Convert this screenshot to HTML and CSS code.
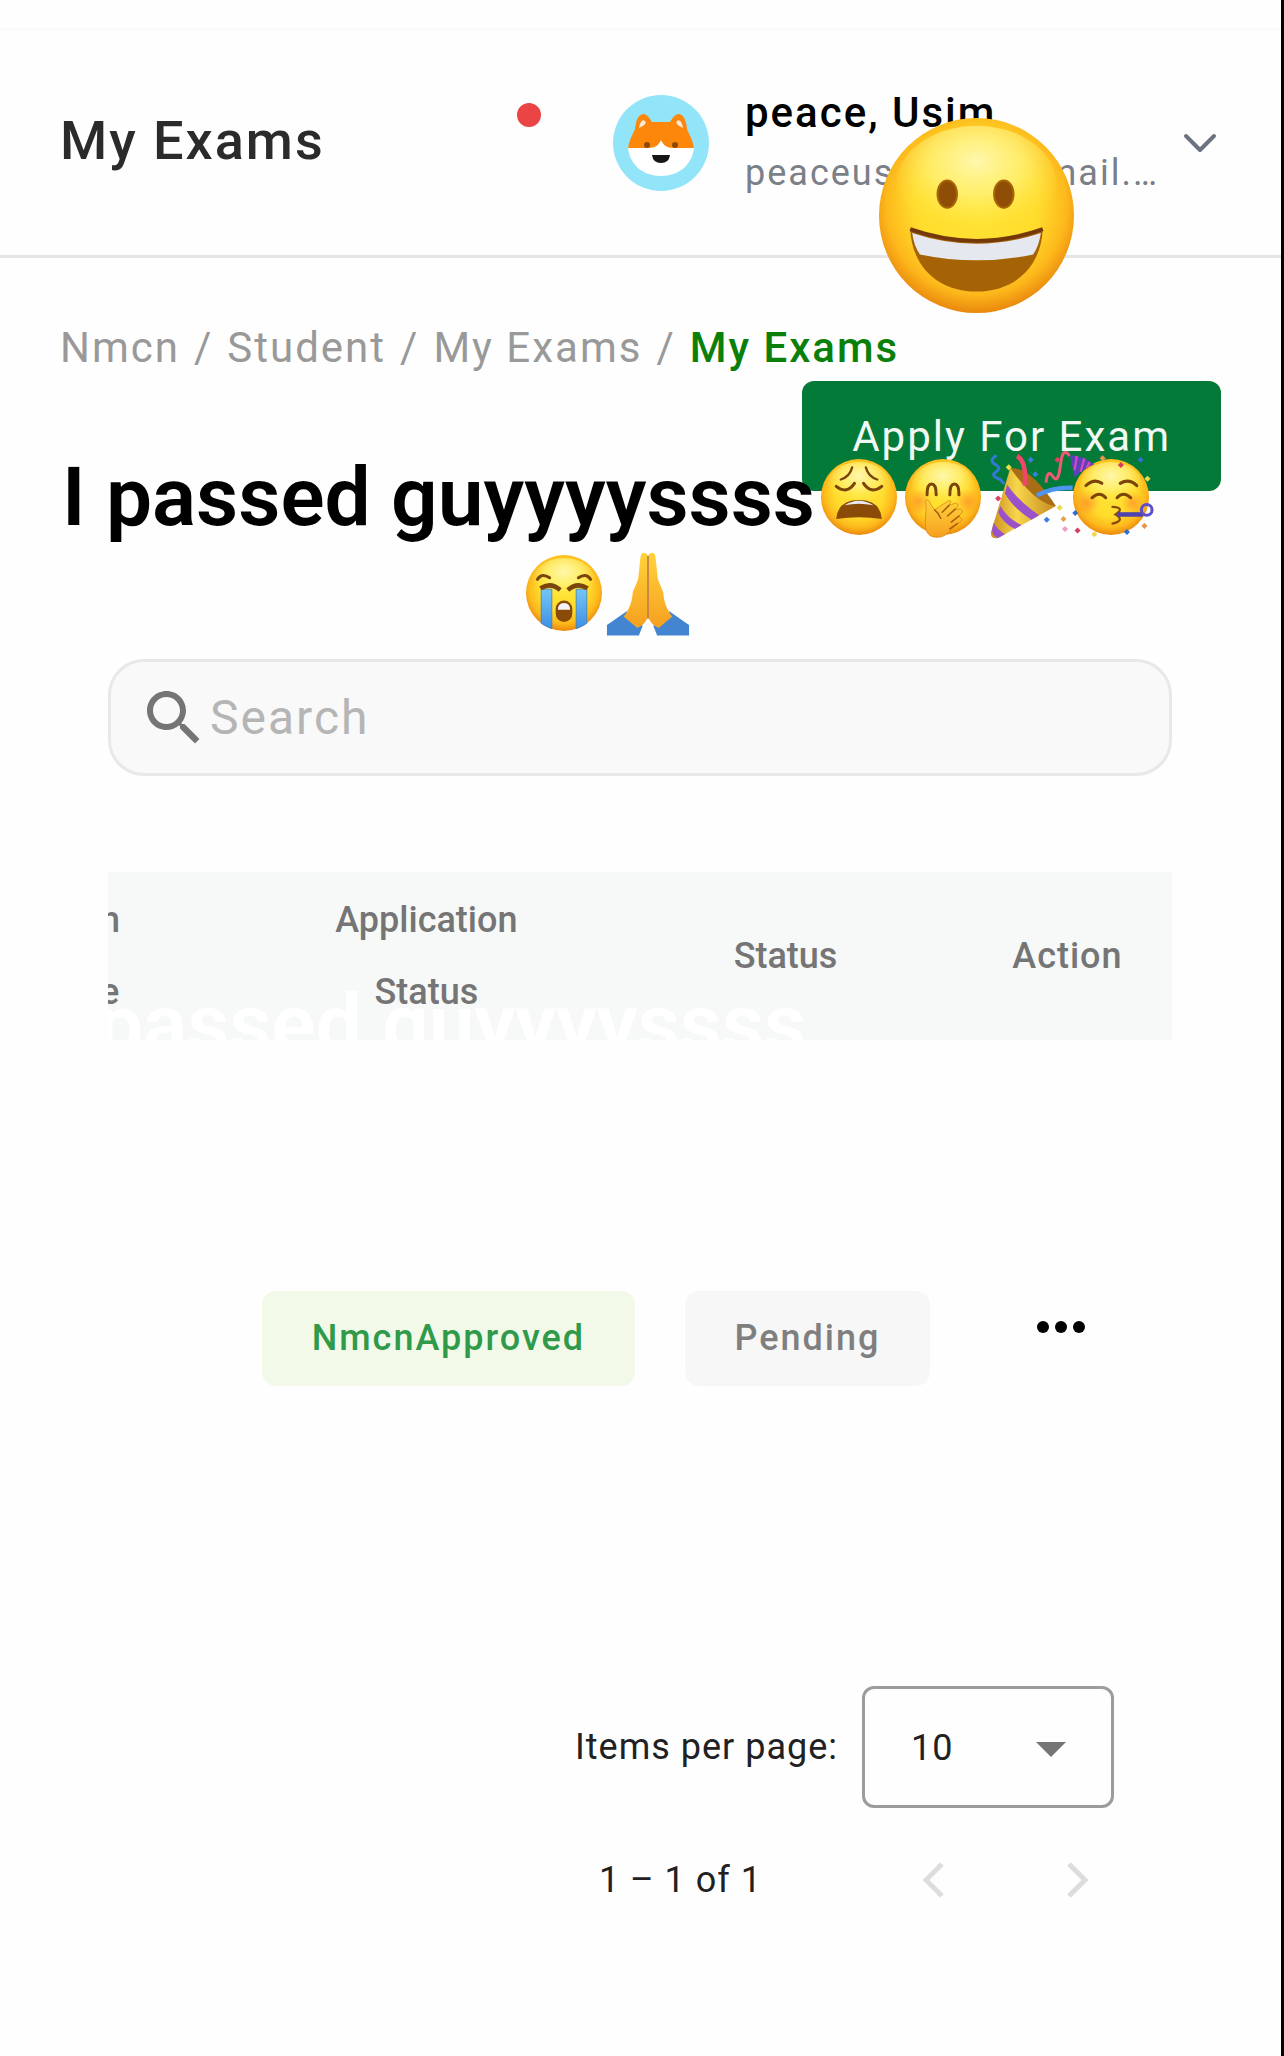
FILE: index.html
```html
<!DOCTYPE html>
<html lang="en">
<head>
<meta charset="utf-8">
<meta name="viewport" content="width=device-width, initial-scale=1">
<title>My Exams</title>
<link rel="stylesheet" href="styles.css">
</head>
<body>
<svg class="defs" aria-hidden="true">
  <defs>
    <radialGradient id="face" cx="50%" cy="44%" r="58%">
      <stop offset="0" stop-color="#ffe436"/>
      <stop offset="0.55" stop-color="#ffdc2c"/>
      <stop offset="0.8" stop-color="#fdb81b"/>
      <stop offset="1" stop-color="#e57e0b"/>
    </radialGradient>
    <radialGradient id="shine" cx="50%" cy="30%" r="60%">
      <stop offset="0" stop-color="#fffbc4" stop-opacity="0.85"/>
      <stop offset="0.5" stop-color="#fff78a" stop-opacity="0.6"/>
      <stop offset="1" stop-color="#ffe640" stop-opacity="0"/>
    </radialGradient>
    <radialGradient id="blush">
      <stop offset="0" stop-color="#ff7a2a" stop-opacity="0.6"/>
      <stop offset="1" stop-color="#ff8a2a" stop-opacity="0"/>
    </radialGradient>
    <linearGradient id="skin" x1="0" y1="0" x2="0" y2="1">
      <stop offset="0" stop-color="#ffd33c"/>
      <stop offset="1" stop-color="#f6a01f"/>
    </linearGradient>
    <linearGradient id="tear" x1="0" y1="0" x2="0" y2="1">
      <stop offset="0" stop-color="#74c6f7"/>
      <stop offset="1" stop-color="#3d8fe6"/>
    </linearGradient>
    <linearGradient id="gold" x1="0" y1="0" x2="1" y2="0">
      <stop offset="0" stop-color="#c98d1e"/>
      <stop offset="0.4" stop-color="#f7d64c"/>
      <stop offset="1" stop-color="#c48a1f"/>
    </linearGradient>
    <g id="head">
      <circle cx="50" cy="50" r="50" fill="url(#face)"/>
      <ellipse cx="50" cy="34" rx="41" ry="30" fill="url(#shine)"/>
    </g>
  </defs>
</svg>

<header class="topbar">
  <h1 class="title">My Exams</h1>
  <span class="alert-dot"></span>
  <svg class="avatar" viewBox="0 0 96 96" aria-hidden="true">
    <circle cx="48" cy="48" r="48" fill="#92e5f9"/>
    <path d="M15 54C16 45 20 39 22 34C23 24 26 19 31 19C35 20 37 24 39 27H57C59 24 61 20 65 19C70 19 73 24 74 34C76 39 80 45 81 54Z" fill="#fd870b"/>
    <path d="M26 33Q28 23 32 26Q35 29 26 33ZM70 33Q68 23 64 26Q61 29 70 33Z" fill="#fbe8d8"/>
    <path d="M15 53H36C42 53 46 50 48 45C50 50 54 53 60 53H81C79 70 66 81 48 81S17 70 15 53Z" fill="#fff"/>
    <circle cx="34" cy="50" r="3" fill="#8c4a0a"/><circle cx="62" cy="50" r="3" fill="#8c4a0a"/>
    <path d="M39 60H57Q56 68 48 68T39 60Z" fill="#161616"/>
  </svg>
  <div class="account">
    <p class="account-name">peace, Usim</p>
    <p class="account-mail"><span>peaceus</span><span>mail.…</span></p>
  </div>
  <button class="icon-button" type="button" aria-label="Account menu">
    <svg width="34" height="20" viewBox="0 0 34 20" fill="none" stroke="#6b7280" stroke-width="4" stroke-linecap="round" stroke-linejoin="round"><path d="M3 3L17 17L31 3"/></svg>
  </button>
</header>

<main class="content">
  <nav class="crumbs" aria-label="Breadcrumb">
    <a href="#">Nmcn</a><span>/</span><a href="#">Student</a><span>/</span><a href="#">My Exams</a><span>/</span><a class="current" href="#">My Exams</a>
  </nav>
  <div class="actions"><button class="apply" type="button">Apply For Exam</button></div>

  <section class="panel">
    <label class="search">
      <svg width="72" height="72" viewBox="0 0 24 24" fill="#757575" aria-hidden="true"><path d="M15.5 14h-.79l-.28-.27C15.41 12.59 16 11.11 16 9.5 16 5.91 13.09 3 9.5 3S3 5.91 3 9.5 5.91 16 9.5 16c1.61 0 3.09-.59 4.23-1.57l.27.28v.79l5 4.99L20.49 19l-4.99-5zm-6 0C7.01 14 5 11.99 5 9.5S7.01 5 9.5 5 14 7.01 14 9.5 11.99 14 9.5 14z"/></svg>
      <input type="search" placeholder="Search" aria-label="Search">
    </label>

    <div class="table-scroll">
      <table class="exams">
        <thead>
          <tr>
            <th class="col-edge">n<br>e</th>
            <th class="col-application">Application<br>Status</th>
            <th class="col-status">Status</th>
            <th class="col-action">Action</th>
          </tr>
        </thead>
        <tbody>
          <tr>
            <td></td>
            <td><span class="chip chip-approved">NmcnApproved</span></td>
            <td><span class="chip chip-pending">Pending</span></td>
            <td>
              <button class="more" type="button" aria-label="More actions">
                <svg width="50" height="14" viewBox="0 0 50 14"><circle cx="7" cy="7" r="6"/><circle cx="25" cy="7" r="6"/><circle cx="43" cy="7" r="6"/></svg>
              </button>
            </td>
          </tr>
        </tbody>
      </table>
      <div class="echo-clip" aria-hidden="true"><span class="echo">I passed guyyyyssss</span></div>
    </div>

    <footer class="paginator">
      <div class="page-size">
        <label for="size">Items per page:</label>
        <div class="select-box">
          <select id="size"><option>10</option></select>
          <svg class="caret" width="30" height="15" viewBox="0 0 30 15" fill="#757575" aria-hidden="true"><path d="M0 0H30L15 15Z"/></svg>
        </div>
      </div>
      <div class="page-nav">
        <span class="range">1 – 1 of 1</span>
        <button class="page-button" type="button" aria-label="Previous page"><svg width="24" height="36" viewBox="0 0 24 36" fill="none" stroke="#ddd" stroke-width="5"><path d="M21 2L5 18L21 34"/></svg></button>
        <button class="page-button" type="button" aria-label="Next page"><svg width="24" height="36" viewBox="0 0 24 36" fill="none" stroke="#ddd" stroke-width="5"><path d="M3 2L19 18L3 34"/></svg></button>
      </div>
    </footer>
  </section>
</main>

<svg class="sticker" viewBox="0 0 100 100" role="img" aria-label="Grinning face">
  <use href="#head"/>
  <ellipse cx="35" cy="39" rx="5" ry="7" fill="#8f4e06" stroke="#a86408" stroke-width="1"/><ellipse cx="64" cy="39" rx="5" ry="7" fill="#8f4e06" stroke="#a86408" stroke-width="1"/>
  <path d="M16 57Q50 69 84 57C83 77 69 89 50 89S17 77 16 57Z" fill="#a56306"/>
  <path d="M17 59Q50 70 83 59Q82 66 79 70Q50 76 21 70Q18 66 17 59Z" fill="#e6e8f0"/>
  <path d="M16 57Q50 69 84 57" fill="none" stroke="#74390a" stroke-width="2"/>
</svg>

<div class="caption">
  <div class="caption-line">
    <span class="caption-text">I passed guyyyyssss</span>
    <span class="emoji-row">
      <svg class="emoji" viewBox="0 0 100 100" role="img" aria-label="Weary face">
        <use href="#head"/>
        <path d="M26 27Q38 23 41 11M74 27Q62 23 59 11" fill="none" stroke="#7b4409" stroke-width="3" stroke-linecap="round"/>
        <path d="M20 36Q34 47 44 32M80 36Q66 47 56 32" fill="none" stroke="#7b4409" stroke-width="4" stroke-linecap="round"/>
        <path d="M20 79Q22 54 50 54T80 79Q50 74 20 79Z" fill="#8a4b08"/>
        <path d="M31 61Q50 49 69 61Q50 57 31 61Z" fill="#e9e9f2"/>
      </svg>
      <svg class="emoji" viewBox="0 0 100 100" role="img" aria-label="Face with hand over mouth">
        <use href="#head"/>
        <circle cx="18" cy="56" r="17" fill="url(#blush)"/><circle cx="82" cy="56" r="17" fill="url(#blush)"/>
        <path d="M29 47Q29 33 35 33T41 47M59 47Q59 33 65 33T71 47" fill="none" stroke="#7b4409" stroke-width="4" stroke-linecap="round"/>
        <path d="M28 94C24 80 30 67 27 55Q30 51 34 60L39 67L57 55Q64 54 57 61L67 58Q73 60 66 66L73 66Q79 69 71 75L74 78Q77 82 69 85C60 91 56 103 43 103C35 103 30 100 28 94Z" fill="url(#skin)" stroke="#d98212" stroke-width="1"/>
        <path d="M39 67Q45 72 47 78M58 61L49 70M66 66L56 75M71 75L61 83M69 85L59 92" fill="none" stroke="#a95b0b" stroke-width="2" stroke-linecap="round"/>
      </svg>
      <svg class="emoji" viewBox="0 0 100 100" role="img" aria-label="Party popper">
        <path d="M28 12L88 62L12 104Q1 106 3 95Z" fill="url(#gold)"/>
        <path d="M28 12Q55 10 88 62Q62 60 28 12Z" fill="#a96d18"/>
        <path d="M24 34Q38 55 66 74L56 80Q32 65 21 45ZM15 62Q25 79 43 87L34 92Q18 84 12 70ZM6 84Q12 94 21 99L12 104Q4 100 4 93Z" fill="#9a52cb"/>
        <path d="M37 -4Q50 4 47 35" fill="none" stroke="#ef4767" stroke-width="6"/>
        <path d="M63 48Q84 37 110 38" fill="none" stroke="#4b94ef" stroke-width="6"/>
        <path d="M10 -5Q-1 2 8 7T9 17T15 27L20 33" fill="none" stroke="#3179d3" stroke-width="4"/>
        <path d="M75 31Q77 12 84 23T94 8T106 -4" fill="none" stroke="#ed5b74" stroke-width="4"/>
        <path d="M26 7l4 4-4 4-4-4zM93 60l4 4-4 4-4-4z" fill="#e9de47"/>
        <path d="M55 -3l4 4-4 4-4-4zM61 16l4 4-4 4-4-4zM76 76l4 4-4 4-4-4z" fill="#3b7de0"/>
        <path d="M12 48l4 4-4 4-4-4zM90 -3l4 4-4 4-4-4z" fill="#dc4062"/>
        <path d="M98 75l4 4-4 4-4-4z" fill="#e6a14d"/><path d="M100 88l4 4-4 4-4-4z" fill="#ef9bc4"/>
      </svg>
      <svg class="emoji" viewBox="0 0 100 100" role="img" aria-label="Partying face">
        <use href="#head"/>
        <circle cx="18" cy="58" r="18" fill="url(#blush)"/><circle cx="78" cy="58" r="15" fill="url(#blush)"/>
        <path d="M-4 -5Q12 -5 28 7Q14 13 2 24Z" fill="#6040ba"/>
        <path d="M5 -4L2 15M15 -1L10 17M22 4L18 12" stroke="#d04bc0" stroke-width="3"/>
        <path d="M17 35Q28 25 38 32M62 32Q74 25 84 35M25 51Q35 42 43 51M58 51Q66 42 76 51" fill="none" stroke="#7b4409" stroke-width="4" stroke-linecap="round"/>
        <path d="M52 63Q69 64 56 73Q69 81 52 85" fill="none" stroke="#8a4b08" stroke-width="3" stroke-linecap="round"/>
        <path d="M59 73H92" stroke="#4e43af" stroke-width="6"/><circle cx="97" cy="67" r="7" fill="none" stroke="#5a4fcc" stroke-width="4"/>
        <path d="M63 4l4 4-4 4-4-4zM6 90l4 4-4 4-4-4z" fill="#d93b5e"/>
        <path d="M89 -3l4 4-4 4-4-4zM71 92l4 4-4 4-4-4zM3 67l4 4-4 4-4-4z" fill="#2f6fd4"/>
        <path d="M98 22l4 4-4 4-4-4zM28 95l4 4-4 4-4-4z" fill="#efd94a"/><path d="M94 84l4 4-4 4-4-4zM39 -5l4 4-4 4-4-4z" fill="#e9964b"/>
      </svg>
    </span>
  </div>
  <div class="emoji-row">
    <svg class="emoji" viewBox="0 0 100 100" role="img" aria-label="Loudly crying face">
      <use href="#head"/>
      <path d="M20 45H34V97Q26 94 20 90ZM66 45H80V90Q74 94 66 97Z" fill="url(#tear)" stroke="#3b7cae" stroke-width="1"/>
      <path d="M19 44Q32 35 45 46M55 46Q68 35 81 44" fill="none" stroke="#7b4409" stroke-width="6"/>
      <path d="M15 32Q21 23 31 30M85 32Q79 23 69 30" fill="none" stroke="#7b4409" stroke-width="4" stroke-linecap="round"/>
      <rect x="39" y="60" width="22" height="28" rx="11" fill="#8a4b08"/><path d="M42 72Q42 63 50 63T58 72Z" fill="#f4f4f8"/>
    </svg>
    <svg class="emoji" viewBox="0 0 100 100" role="img" aria-label="Folded hands">
      <path d="M-4 92L22 74L43 93L38 106H-4ZM104 92L78 74L57 93L62 106H104Z" fill="#4485d2"/>
      <path d="M49 -1Q41 -7 40 4L37 32L30 49C29 63 24 74 18 81L36 96Q46 92 49 83Z" fill="url(#skin)"/>
      <path d="M51 -1Q59 -7 60 4L63 32L70 49C71 63 76 74 82 81L64 96Q54 92 51 83Z" fill="url(#skin)"/>
      <path d="M50 1V84" stroke="#b86a13" stroke-width="2"/>
    </svg>
  </div>
</div>
</body>
</html>
```
FILE: styles.css
```css
* {
  box-sizing: border-box;
}

body {
  position: relative;
  min-height: 100vh;
  margin: 0;
  padding-top: 28px;
  border-right: 3px solid #000;
  background: #fefefe;
  color: #212121;
  font-family: Roboto, "Liberation Sans", sans-serif;
  font-size: 36px;
  letter-spacing: 1px;
}

h1,
p {
  margin: 0;
}

button,
input,
select {
  font: inherit;
  letter-spacing: inherit;
}

button {
  padding: 0;
  border: 0;
  background: none;
}

svg {
  flex: none;
  overflow: visible;
}

.defs {
  position: absolute;
  width: 0;
  height: 0;
}

.topbar {
  display: flex;
  align-items: center;
  height: 230px;
  padding: 0 64px 0 60px;
  border-top: 2px solid #fafafa;
  border-bottom: 3px solid #e5e5e5;
}

.title {
  flex: 1;
  padding-bottom: 4px;
  color: #2b2b2b;
  font-size: 54px;
  font-weight: 500;
  letter-spacing: 2px;
}

.alert-dot {
  width: 24px;
  height: 24px;
  margin: 0 72px 56px 0;
  border-radius: 50%;
  background: #ea4444;
}

.avatar {
  width: 96px;
  height: 96px;
  margin-right: 36px;
}

.account {
  width: 414px;
  margin-right: 24px;
}

.account-name {
  color: #000;
  font-size: 42px;
  font-weight: 500;
  line-height: 60px;
  letter-spacing: 2px;
}

.account-mail {
  display: flex;
  justify-content: space-between;
  color: #7b7f88;
  line-height: 60px;
  letter-spacing: 2px;
}

.icon-button {
  display: flex;
}

.content {
  padding: 60px 60px 0;
}

.crumbs {
  display: flex;
  gap: 14px;
  color: #999;
  font-size: 42px;
  line-height: 60px;
  letter-spacing: 2px;
}

.crumbs a {
  color: inherit;
  text-decoration: none;
}

.crumbs .current {
  color: #0a800a;
  font-weight: 500;
}

.actions {
  display: flex;
  justify-content: flex-end;
  padding-top: 3px;
}

.apply {
  height: 110px;
  padding: 0 50px;
  border-radius: 12px;
  background: #047a38;
  color: #f2f8f4;
  font-size: 42px;
  letter-spacing: 2px;
}

.panel {
  padding: 168px 49px 0 48px;
}

.search {
  display: flex;
  align-items: center;
  height: 117px;
  padding-left: 27px;
  border: 3px solid #e8e8e8;
  border-radius: 36px;
  background: #f9f9f9;
}

.search input {
  flex: 1;
  min-width: 0;
  padding: 0;
  border: 0;
  outline: 0;
  background: none;
  font-size: 48px;
  letter-spacing: 2px;
}

.search input::placeholder {
  color: #b5b5b5;
}

.table-scroll {
  position: relative;
  display: flex;
  justify-content: flex-end;
  margin-top: 96px;
  overflow: hidden;
}

.exams {
  flex: none;
  width: calc(100% + 8px);
  border-collapse: collapse;
  table-layout: fixed;
}

.exams th {
  height: 168px;
  padding: 0 44px 0 0;
  background: #f7f9f8;
  color: #757575;
  font-weight: 500;
  line-height: 72px;
  letter-spacing: 0;
}

.exams th.col-edge {
  width: 12%;
  text-align: left;
}

.col-application {
  width: 41%;
}

.col-status {
  width: 26%;
}

.exams th.col-action {
  padding: 0 0 0 16px;
  letter-spacing: 1px;
}

.exams td {
  height: 596px;
  padding: 0;
  text-align: center;
}

.chip {
  display: inline-block;
  padding: 0 50px;
  border-radius: 14px;
  font-weight: 500;
  line-height: 95px;
  letter-spacing: 2px;
}

.chip-approved {
  background: #f2f9e9;
  color: #2f9a49;
}

.chip-pending {
  background: #f7f7f7;
  color: #7f7f7f;
}

.more {
  padding: 0 0 32px 4px;
}

.echo-clip {
  position: absolute;
  inset: 0 0 auto;
  height: 168px;
  overflow: hidden;
}

.echo {
  position: absolute;
  top: 104px;
  left: -55px;
  color: #fff;
}

.echo,
.caption-text {
  font-size: 82px;
  font-weight: 600;
  line-height: 96px;
  letter-spacing: 0;
  white-space: nowrap;
}

.paginator {
  display: flex;
  flex-direction: column;
  align-items: flex-end;
  padding: 50px 22px 60px 0;
}

.page-size {
  display: flex;
  align-items: center;
  gap: 24px;
  margin-right: 36px;
}

.select-box {
  position: relative;
}

.select-box select {
  display: block;
  width: 252px;
  height: 122px;
  padding: 2px 46px 0;
  border: 3px solid #9c9c9c;
  border-radius: 12px;
  appearance: none;
  background: none;
  color: inherit;
}

.caret {
  position: absolute;
  top: 56px;
  right: 48px;
  pointer-events: none;
}

.page-nav {
  display: flex;
  align-items: center;
}

.range {
  margin-right: 98px;
}

.page-button {
  display: flex;
  align-items: center;
  justify-content: center;
  width: 145px;
  height: 144px;
}

.sticker {
  position: absolute;
  top: 118px;
  right: 207px;
  width: 195px;
  height: 195px;
}

.caption {
  position: absolute;
  top: 449px;
  right: 132px;
  left: 62px;
  display: flex;
  flex-direction: column;
  align-items: center;
  color: #000;
}

.caption-line {
  display: flex;
  align-items: center;
  gap: 6px;
}

.emoji-row {
  display: flex;
  align-items: center;
  gap: 8px;
  height: 96px;
}

.emoji {
  width: 76px;
  height: 76px;
}
```
